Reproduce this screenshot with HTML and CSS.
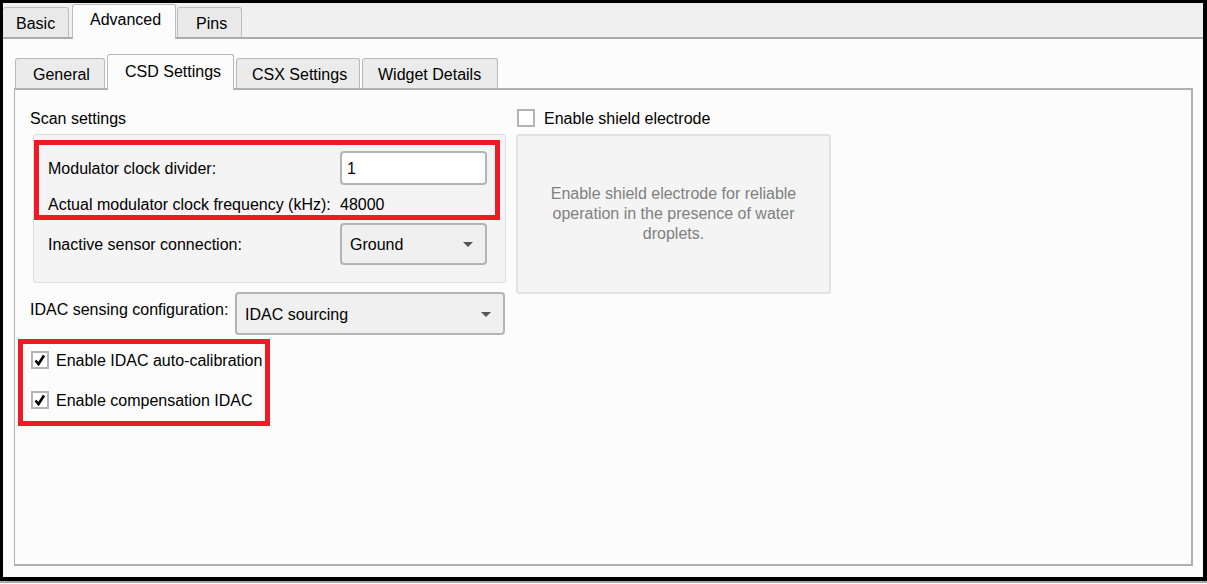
FILE: index.html
```html
<!DOCTYPE html>
<html>
<head>
<meta charset="utf-8">
<link rel="stylesheet" href="styles.css">
</head>
<body>
<div class="frame">
  <div class="tabbar">
    <div class="tab tab-basic">Basic</div>
    <div class="tab tab-adv active">Advanced</div>
    <div class="tab tab-pins">Pins</div>
  </div>
  <div class="content">
    <div class="subtabs">
      <div class="stab stab-gen">General</div>
      <div class="stab stab-csd active">CSD Settings</div>
      <div class="stab stab-csx">CSX Settings</div>
      <div class="stab stab-wd">Widget Details</div>
    </div>
    <div class="panel">
      <div class="col-left">
        <div class="caption">Scan settings</div>
        <div class="group">
          <div class="redbox redbox-scan">
            <div class="frow row-input">
              <span class="lbl">Modulator clock divider:</span>
              <div class="input">1</div>
            </div>
            <div class="frow row-text">
              <span class="lbl">Actual modulator clock frequency (kHz):</span>
              <span class="val">48000</span>
            </div>
          </div>
          <div class="frow row-combo">
            <span class="lbl">Inactive sensor connection:</span>
            <div class="combo"><span class="ctext">Ground</span><span class="arrow"></span></div>
          </div>
        </div>
        <div class="idac-row">
          <span class="lbl idac-lbl">IDAC sensing configuration:</span>
          <div class="combo combo-wide"><span class="ctext">IDAC sourcing</span><span class="arrow"></span></div>
        </div>
        <div class="redbox redbox-checks">
          <div class="check-row">
            <span class="cb checked"><svg viewBox="0 0 18 18" width="18" height="18"><path d="M4.5 9.5 L7.5 13 L13 4.5" fill="none" stroke="#000" stroke-width="2.6"/></svg></span>
            <span class="ctext">Enable IDAC auto-calibration</span>
          </div>
          <div class="check-row">
            <span class="cb checked"><svg viewBox="0 0 18 18" width="18" height="18"><path d="M4.5 9.5 L7.5 13 L13 4.5" fill="none" stroke="#000" stroke-width="2.6"/></svg></span>
            <span class="ctext">Enable compensation IDAC</span>
          </div>
        </div>
      </div>
      <div class="col-right">
        <div class="check-row shield-row">
          <span class="cb"></span>
          <span class="ctext">Enable shield electrode</span>
        </div>
        <div class="shield-box">
          <p>Enable shield electrode for reliable operation in the presence of water droplets.</p>
        </div>
      </div>
    </div>
  </div>
</div>
<div class="under"></div>
</body>
</html>
```
FILE: styles.css
```css
html, body {
  margin: 0;
  padding: 0;
  background: #ffffff;
}
body {
  font-family: "Liberation Sans", Arial, sans-serif;
  font-size: 16px;
  color: #000;
  width: 1207px;
  height: 584px;
  overflow: hidden;
}
.frame {
  width: 1207px;
  height: 581px;
  box-sizing: border-box;
  border: 3px solid #000;
  border-right-width: 4px;
  border-bottom-width: 4px;
  display: flex;
  flex-direction: column;
  background: #fcfcfc;
}
.under {
  height: 2px;
  background: #a9a9a9;
}
.tabbar {
  height: 36px;
  box-sizing: border-box;
  background: #f0f0f0;
  border-bottom: 2px solid #ababab;
  display: flex;
  align-items: flex-end;
  flex: none;
}
.tab {
  height: 30px;
  box-sizing: border-box;
  display: flex;
  align-items: center;
  padding-top: 2px;
  background: #e9e9e9;
  border: 1px solid #bdbdbd;
  border-bottom: none;
  border-radius: 3px 3px 0 0;
  white-space: nowrap;
}
.tab-basic {
  border-left: none;
  width: 66px;
  padding-left: 13px;
}
.tab-adv {
  margin-left: 3px;
  width: 104px;
  padding-left: 17px;
}
.tab-pins {
  margin-left: 1px;
  width: 65px;
  padding-left: 18px;
}
.tab.active {
  height: 35px;
  margin-bottom: -2px;
  background: #fcfcfc;
  padding-top: 0;
  padding-bottom: 4px;
  position: relative;
  z-index: 1;
}
.content {
  flex: 1;
  display: flex;
  flex-direction: column;
  padding: 15px 10px 11px 11px;
  min-height: 0;
}
.subtabs {
  display: flex;
  align-items: flex-end;
  padding-left: 1px;
  flex: none;
}
.stab {
  height: 30px;
  box-sizing: border-box;
  padding-top: 3px;
  display: flex;
  align-items: center;
  background: #ebebeb;
  border: 1px solid #b9b9b9;
  border-bottom: none;
  border-radius: 3px 3px 0 0;
  white-space: nowrap;
}
.stab-gen {
  width: 90px;
  padding-left: 17px;
}
.stab-csd {
  margin-left: 2px;
  width: 127px;
  padding-left: 17px;
}
.stab-csx {
  margin-left: 2px;
  width: 124px;
  padding-left: 15px;
}
.stab-wd {
  margin-left: 2px;
  width: 136px;
  padding-left: 15px;
}
.stab.active {
  height: 36px;
  margin-bottom: -2px;
  background: #fcfcfc;
  position: relative;
  z-index: 1;
  padding-top: 0;
  padding-bottom: 1px;
}
.panel {
  flex: 1;
  border: 1px solid #b0b0b0;
  border-top-width: 2px;
  border-right-width: 2px;
  border-bottom-width: 2px;
  background: #fcfcfc;
  padding: 0 0 0 15px;
  display: flex;
  gap: 11px;
  align-items: flex-start;
}
.col-left {
  width: 475px;
  display: flex;
  flex-direction: column;
}
.caption {
  line-height: 20px;
  margin-top: 18px;
  padding-top: 1px;
  height: 20px;
  box-sizing: border-box;
}
.group {
  margin-top: 6px;
  margin-left: 3px;
  width: 473px;
  box-sizing: border-box;
  background: #f4f4f4;
  border: 1px solid #dcdcdc;
  border-radius: 3px;
  padding: 5px 5px 17px 0;
}
.redbox {
  border: 5px solid #ed1c24;
  box-sizing: border-box;
}
.redbox-scan {
  padding: 6px 0 1px 9px;
  height: 80px;
}
.frow {
  display: grid;
  grid-template-columns: 292px 147px;
  align-items: center;
}
.lbl {
  padding-top: 2px;
  line-height: 20px;
}
.row-input {
  height: 34px;
}
.row-text {
  height: 20px;
  margin-top: 9px;
  line-height: 20px;
}
.row-text .lbl, .row-text .val {
  padding-top: 1px;
}
.row-combo {
  margin-top: 3px;
  padding-left: 14px;
  height: 42px;
}
.input {
  height: 34px;
  box-sizing: border-box;
  background: #fff;
  border: 2px solid #b4b4b4;
  border-radius: 4px;
  padding: 2px 0 0 5px;
  display: flex;
  align-items: center;
}
.combo {
  height: 42px;
  box-sizing: border-box;
  background: #f0f0f0;
  border: 2px solid #b4b4b4;
  border-radius: 4px;
  padding: 0 12px 0 8px;
  display: flex;
  align-items: center;
  justify-content: space-between;
}
.ctext {
  padding-top: 2px;
}
.arrow {
  width: 0;
  height: 0;
  border-left: 5px solid transparent;
  border-right: 5px solid transparent;
  border-top: 5px solid #555;
}
.idac-row {
  margin-top: 9px;
  display: flex;
  justify-content: space-between;
  align-items: flex-start;
}
.idac-lbl {
  padding-top: 8px;
  line-height: 20px;
}
.combo-wide {
  width: 270px;
  height: 43px;
  padding-top: 1px;
}
.redbox-checks {
  margin-top: 4px;
  margin-left: -12px;
  width: 252px;
  height: 87px;
  padding: 6px 0 0 8px;
  display: flex;
  flex-direction: column;
  gap: 20px;
}
.check-row {
  display: flex;
  align-items: center;
  gap: 7px;
  line-height: 20px;
  height: 20px;
}
.cb {
  width: 18px;
  height: 18px;
  box-sizing: border-box;
  border: 2px solid #b4b4b4;
  background: #fff;
  display: flex;
  align-items: center;
  justify-content: center;
  flex: none;
}
.cb svg {
  flex: none;
}
.col-right {
  width: 315px;
  display: flex;
  flex-direction: column;
}
.shield-row {
  margin-top: 18px;
  gap: 9px;
  padding-left: 1px;
}
.shield-box {
  margin-top: 6px;
  height: 160px;
  box-sizing: border-box;
  background: #f4f4f4;
  border: 2px solid #e2e2e2;
  border-radius: 3px;
  display: flex;
  align-items: center;
  justify-content: center;
  padding: 0 26px;
}
.shield-box p {
  margin: 0;
  text-align: center;
  color: #808080;
  line-height: 20px;
}
```
